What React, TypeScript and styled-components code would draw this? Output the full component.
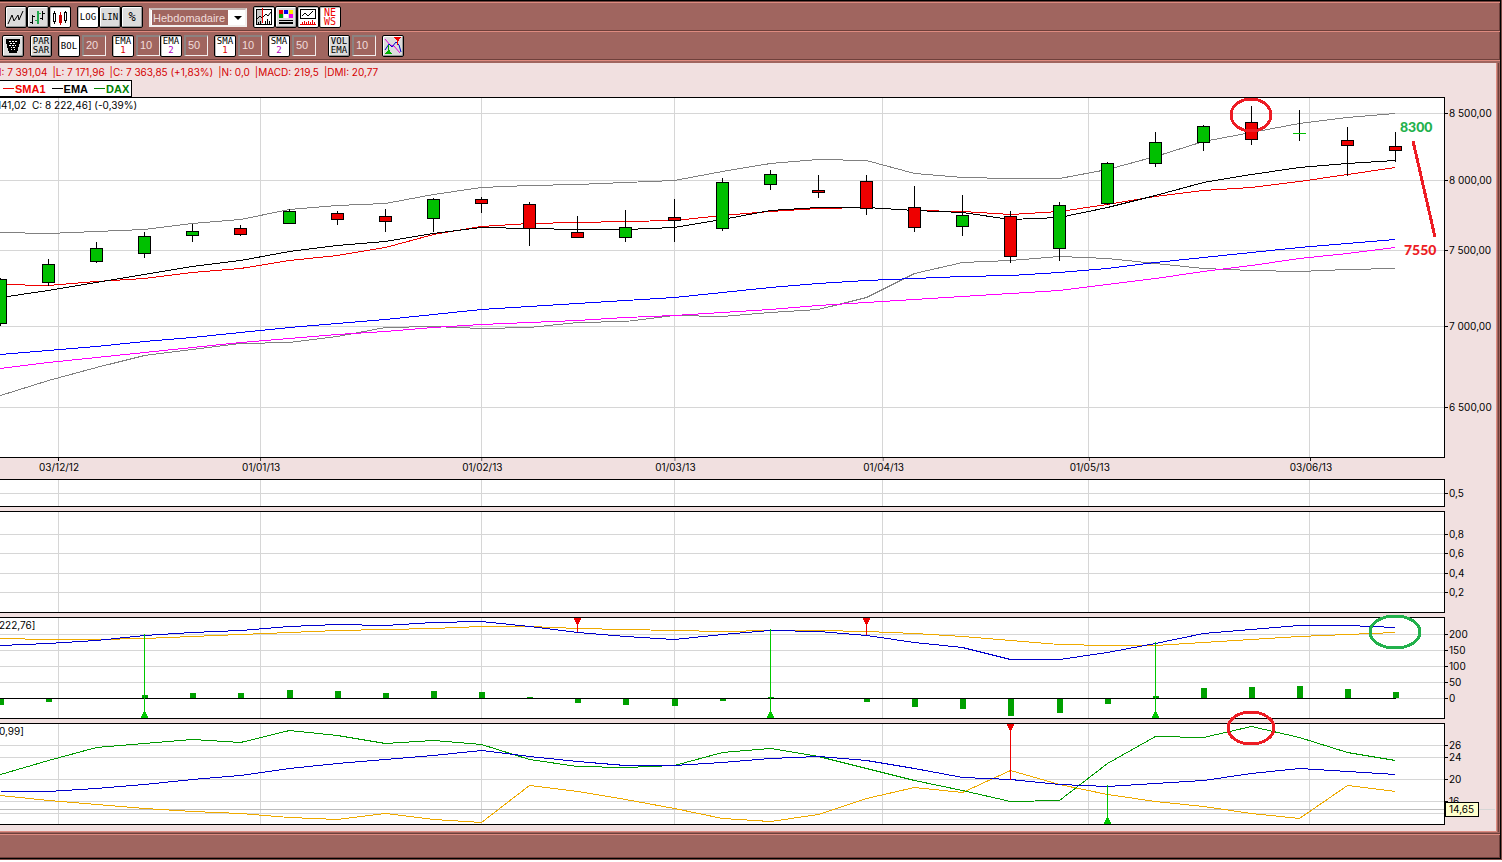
import React from "react";
import styled, { createGlobalStyle, css } from "styled-components";

const brown = "#a0655f";
const brownDark = "#6e3f3a";
const brownLight = "#de8b80";
const rose = "#f1e0e0";
const gridColor = "#d6d6d6";
const uiFont = '"Liberation Sans", Arial, sans-serif';
const chartFont = 'Inter, "Liberation Sans", sans-serif';

const GlobalStyle = createGlobalStyle`
  *, *::before, *::after { box-sizing: border-box; }
  body { margin: 0; background: #fff; font: 11px/14px ${uiFont}; color: #000; }
`;

/* ---------- window frame ---------- */

const OuterEdge = styled.div`
  border-right: 1px solid #7d4b46;
  border-bottom: 1px solid #7d4b46;
`;

const Frame = styled.div`
  display: flex;
  flex-direction: column;
  border: 1px solid #000;
  border-left: 0;
  background: ${brown};
  overflow: hidden;
`;

const Toolbar = styled.div`
  display: flex;
  align-items: flex-start;
  height: 29px;
  padding-top: 4px;
  padding-left: ${(p: { $indent: number }) => p.$indent}px;
  border-top: 1px solid ${brownDark};
  box-shadow: inset 0 1px 0 ${brownLight}, inset -1px 0 0 ${brownDark};
`;

const Divider = styled.div`
  height: 4px;
  border-top: 1px solid ${brownDark};
  box-shadow: inset 0 1px 0 ${brownLight};
`;

const StatusBar = styled.footer`
  height: 25px;
  border-top: 1px solid ${brownDark};
  border-bottom: 1px solid ${brownDark};
  box-shadow: inset 0 1px 0 ${brownLight}, inset -1px 0 0 ${brownDark};
`;

const Workspace = styled.main`
  margin-right: 3px;
  margin-bottom: 1px;
  padding-bottom: 6px;
  background: ${rose};
  border-bottom: 1px solid ${brownLight};
  border-right: 1px solid ${brownLight};
  box-shadow: 1px 0 0 ${brown}, 2px 0 0 ${brownDark};
`;

/* ---------- toolbar parts ---------- */

const Group = styled.div`
  display: flex;
  margin-right: ${(p: { $after?: number }) => p.$after ?? 6}px;
`;

const ToolButton = styled.button<{ $on?: boolean }>`
  display: flex;
  flex-direction: column;
  align-items: center;
  justify-content: center;
  width: 22px;
  height: 22px;
  padding: 0;
  border: 1px solid #000;
  border-radius: 2px;
  background: ${(p) => (p.$on ? "#fff" : "#dcdcdc")};
  box-shadow: ${(p) =>
    p.$on ? "inset 1px 1px 0 #bbb" : "inset 1px 1px 0 #fff, inset -1px -1px 0 #999"};
  color: #000;
  font: 9px/9px "DejaVu Sans Mono", monospace;
  svg { display: block; }
`;

const Ink = styled.span<{ $color?: string; $size?: number }>`
  color: ${(p) => p.$color ?? "inherit"};
  font-size: ${(p) => p.$size ?? 9}px;
`;

const NumberBox = styled.input`
  width: 24px;
  height: 21px;
  margin-left: 2px;
  padding: 0 0 2px 2px;
  border: 1px solid;
  border-width: 2px 1px 1px 2px;
  border-color: #8c8280 #f3eeee #f3eeee #8c8280;
  border-radius: 0;
  background: ${brown};
  color: #f0dcda;
  font: 11px/14px ${uiFont};
  outline: none;
`;

const PeriodBox = styled.label`
  display: grid;
  width: 98px;
  height: 19px;
  margin: 2px 6px 0 6px;
  border: 2px solid #f3efee;
  border-top-color: #c9bab8;
  background: #fff;
`;

const PeriodSelect = styled.select`
  grid-area: 1 / 1;
  appearance: none;
  width: 100%;
  padding: 0 0 0 2px;
  border: 0;
  border-radius: 0;
  background: linear-gradient(${brown}, ${brown}) 1px 0 / 76px 100% no-repeat #fff;
  color: #f0dcda;
  font: 11px/14px ${uiFont};
`;

const Arrow = styled.span`
  grid-area: 1 / 1;
  justify-self: end;
  align-self: center;
  margin-right: 3px;
  border: 4px solid transparent;
  border-top-color: #000;
  border-bottom: 0;
  pointer-events: none;
`;

/* ---------- chart parts ---------- */

const QuoteLine = styled.div`
  display: flex;
  align-items: center;
  gap: 5px;
  height: 17px;
  margin-left: -6px;
  padding-top: 1px;
  color: #d40000;
  font: 10px/14px ${chartFont};
  white-space: nowrap;
`;

const Legend = styled.div`
  display: inline-flex;
  align-items: center;
  gap: 6px;
  height: 17px;
  padding: 0 2px 0 3px;
  border: 1px solid #000;
  border-left: 0;
  background: #fff;
  font-weight: bold;
  vertical-align: top;
`;

const LegendItem = styled.span<{ $color: string }>`
  display: flex;
  align-items: center;
  gap: 1px;
  color: ${(p) => p.$color};
  &::before {
    content: "";
    width: 11px;
    height: 1px;
    background: currentColor;
  }
`;

const LegendRow = styled.div`
  height: 17px;
`;

const PanelRow = styled.section<{ $gap?: boolean }>`
  display: flex;
  ${(p) => p.$gap && css`margin-top: 4px;`}
`;

const Plot = styled.svg`
  flex: 1;
  min-width: 0;
  display: block;
  overflow: visible;
  border: 1px solid #000;
  border-left: 0;
  background: #fff;
  font: 10px ${chartFont};
`;

const Scale = styled.svg`
  flex: none;
  width: 51px;
  display: block;
  overflow: visible;
  font: 10px ${chartFont};
`;

const DateStrip = styled.svg`
  display: block;
  width: calc(100% - 51px);
  height: 21px;
  overflow: visible;
  font: 10px ${chartFont};
`;

/* ---------- data ---------- */

const PLOT_W = 1444;
const pct = (x: number) => `${(x / PLOT_W) * 100}%`;

const quotes = [
  "H: 7 391,04",
  "|L: 7 171,96",
  "|C: 7 363,85 (+1,83%)",
  "|N: 0,0",
  "|MACD: 219,5",
  "|DMI: 20,77",
];

const weeks = [
  0, 48, 96, 144, 192, 240, 289, 337, 385, 433, 481, 529, 577, 625, 674, 722, 770, 818, 866, 914,
  962, 1010, 1059, 1107, 1155, 1203, 1251, 1299, 1347, 1395,
];

const months: [number, string][] = [
  [58, "03/12/12"],
  [260, "01/01/13"],
  [481, "01/02/13"],
  [674, "01/03/13"],
  [882, "01/04/13"],
  [1088, "01/05/13"],
  [1309, "03/06/13"],
];

type Series = { color: string; ys: number[] };

const priceSeries: Series[] = [
  {
    color: "#808080",
    ys: [232, 233, 231, 229, 223, 219, 209, 205, 203, 194, 187, 185, 184, 182, 180, 171, 163, 159, 160, 173, 177, 178, 178, 169, 156, 141, 132, 123, 117, 113],
  },
  {
    color: "#808080",
    ys: [395, 380, 367, 355, 349, 343, 342, 336, 327, 326, 328, 327, 322, 321, 315, 316, 312, 309, 297, 273, 262, 260, 256, 258, 263, 268, 270, 271, 269, 268],
  },
  {
    color: "#ff00ff",
    ys: [368, 362, 357, 352, 347, 342, 338, 334, 331, 327, 324, 322, 320, 317, 315, 312, 309, 305, 302, 299, 296, 293, 290, 284, 278, 271, 265, 258, 253, 247],
  },
  {
    color: "#0000ff",
    ys: [354, 350, 346, 341, 337, 332, 327, 323, 319, 314, 309, 306, 303, 300, 297, 292, 287, 283, 280, 278, 276, 275, 272, 268, 262, 257, 252, 247, 243, 239],
  },
  {
    color: "#ee0000",
    ys: [284, 285, 281, 278, 272, 268, 260, 255, 247, 234, 226, 223, 222, 221, 220, 215, 211, 208, 207, 210, 211, 214, 211, 204, 196, 190, 187, 181, 174, 167],
  },
  {
    color: "#000",
    ys: [297, 290, 282, 274, 266, 260, 251, 245, 241, 233, 227, 228, 229, 229, 227, 219, 210, 207, 207, 210, 212, 219, 217, 207, 195, 182, 174, 167, 163, 160],
  },
];

/* per week: high, body top, body bottom, low, rising */
const candles: [number, number, number, number, boolean][] = [
  [278, 279, 323, 325, true],
  [259, 264, 282, 285, true],
  [242, 248, 261, 262, true],
  [232, 236, 253, 257, true],
  [224, 231, 235, 241, true],
  [225, 228, 234, 235, false],
  [209, 211, 223, 223, true],
  [211, 213, 219, 224, false],
  [209, 216, 221, 231, false],
  [198, 199, 218, 231, true],
  [197, 199, 203, 212, false],
  [202, 204, 228, 245, false],
  [216, 232, 237, 237, false],
  [210, 227, 237, 241, true],
  [199, 217, 220, 241, false],
  [178, 182, 228, 230, true],
  [170, 174, 184, 189, true],
  [175, 190, 192, 197, false],
  [175, 181, 208, 214, false],
  [186, 207, 227, 231, false],
  [195, 215, 226, 235, true],
  [211, 216, 256, 262, false],
  [202, 205, 248, 260, true],
  [162, 163, 203, 204, true],
  [132, 142, 163, 166, true],
  [125, 126, 142, 150, true],
  [106, 122, 139, 144, false],
  [110, 133, 133, 140, true],
  [127, 140, 145, 175, false],
  [132, 146, 150, 161, false],
];

const macdSeries: Series[] = [
  {
    color: "#eeaa00",
    ys: [638, 639, 639, 638, 636, 634, 632, 630, 629, 628, 626, 626, 628, 629, 630, 631, 630, 630, 631, 633, 636, 640, 644, 645, 645, 642, 639, 636, 634, 632],
  },
  {
    color: "#0000cc",
    ys: [645, 643, 640, 635, 632, 630, 626, 624, 625, 622, 621, 626, 632, 636, 639, 634, 630, 631, 635, 642, 647, 659, 659, 652, 643, 633, 629, 625, 625, 627],
  },
];

/* far edge of every histogram bar, measured from the zero line at 698 */
const histogram = [
  705, 702, 698, 695, 693, 693, 690, 691, 693, 691, 692, 697, 703, 705, 706, 701, 697, 698, 702,
  707, 709, 716, 713, 704, 696, 688, 687, 686, 689, 692,
];

const dmiSeries: Series[] = [
  {
    color: "#eeaa00",
    ys: [795, 800, 804, 808, 811, 813, 817, 819, 813, 819, 822, 785, 791, 799, 808, 818, 821, 814, 798, 787, 792, 770, 784, 794, 801, 806, 813, 818, 785, 791],
  },
  {
    color: "#009900",
    ys: [774, 760, 747, 743, 739, 742, 730, 735, 743, 740, 744, 759, 766, 767, 765, 752, 748, 756, 768, 780, 790, 801, 800, 763, 736, 737, 726, 737, 752, 760],
  },
  {
    color: "#0000cc",
    ys: [791, 791, 788, 784, 779, 775, 768, 763, 759, 755, 750, 756, 761, 765, 765, 762, 758, 756, 760, 768, 777, 779, 784, 786, 783, 780, 773, 768, 771, 774],
  },
];

/* ---------- chart components ---------- */

function Lines({ series }: { series: Series[] }) {
  return (
    <g fill="none" transform="translate(0.5 0.5)">
      {series.map((s, i) => (
        <polyline key={i} stroke={s.color} points={s.ys.map((y, k) => `${weeks[k]},${y}`).join(" ")} />
      ))}
    </g>
  );
}

function Candles() {
  return (
    <g>
      {candles.map(([high, top, bottom, low, up], i) => {
        const x = weeks[i];
        const fill = up ? "#00c000" : "#ee0000";
        return (
          <g key={x}>
            <rect x={x} y={high} width={1} height={low - high + 1} />
            {top === bottom ? (
              <rect x={x - 6} y={top} width={13} height={1} fill={fill} />
            ) : (
              <>
                <rect x={x - 6} y={top} width={13} height={bottom - top + 1} />
                <rect x={x - 5} y={top + 1} width={11} height={bottom - top - 1} fill={fill} />
              </>
            )}
          </g>
        );
      })}
    </g>
  );
}

function Signal({ x, up, base, to }: { x: number; up?: boolean; base: number; to: number }) {
  const head = up
    ? `M${x - 3} ${base + 1}h7v-2h-1v-2h-1v-2h-3v2h-1v2h-1z`
    : `M${x - 3} ${base}h7v2h-1v2h-1v2h-3v-2h-1v-2h-1z`;
  return (
    <g fill={up ? "#00c800" : "#ee0000"}>
      <rect x={x} y={Math.min(base, to)} width={1} height={Math.abs(base - to)} />
      <path d={head} />
    </g>
  );
}

type PanelProps = {
  label: string;
  top: number;
  height: number;
  ticks: [number, string][];
  extraGrid?: number[];
  gap?: boolean;
  caption?: React.ReactNode;
  scaleExtra?: React.ReactNode;
  children?: React.ReactNode;
};

function Panel({ label, top, height, ticks, extraGrid = [], gap, caption, scaleExtra, children }: PanelProps) {
  const inner = height - 2;
  return (
    <PanelRow $gap={gap} aria-label={label}>
      <Plot height={height}>
        <svg
          width="100%"
          height={inner}
          viewBox={`0 ${top + 1} ${PLOT_W} ${inner}`}
          preserveAspectRatio="none"
          shapeRendering="crispEdges"
          overflow="visible"
        >
          <g fill={gridColor}>
            {[...ticks.map((t) => t[0]), ...extraGrid].map((y) => (
              <rect key={y} x={0} y={y} width={PLOT_W} height={1} />
            ))}
            {months.map(([x]) => (
              <rect key={x} x={x} y={top + 1} width={1} height={inner} />
            ))}
          </g>
          {children}
        </svg>
        {caption}
      </Plot>
      <Scale height={height} viewBox={`0 ${top} 51 ${height}`}>
        {ticks.map(([y, text]) => (
          <g key={y}>
            <rect x={0} y={y} width={3} height={1} />
            <text x={4} y={y + 4}>{text}</text>
          </g>
        ))}
        {scaleExtra}
      </Scale>
    </PanelRow>
  );
}

/* ---------- toolbar icons ---------- */

const Icon = ({ children }: { children: React.ReactNode }) => (
  <svg width={20} height={20} viewBox="0 0 20 20" fill="none" stroke="#000" shapeRendering="crispEdges" aria-hidden="true">
    {children}
  </svg>
);

const LineIcon = () => (
  <Icon>
    <path d="M2 17L6 8L8 14L12 8L13 13L17 4" shapeRendering="auto" />
  </Icon>
);

const BarsIcon = () => (
  <Icon>
    <path d="M4.500 8v9M2 15.500h2M5 9.500h2M14.500 4v9M12 11.500h2M15 6.500h2" />
    <path d="M10 4v13" stroke="#22a84c" strokeWidth={2} />
    <path d="M7 13.500h2M11 6.500h2" stroke="#22a84c" />
  </Icon>
);

const CandleIcon = () => (
  <Icon>
    <path d="M4.500 4v3M4.500 14v3M15.500 4v2M15.500 13v3" />
    <path d="M3.500 6.500h2v8h-2zM14.500 5.500h2v8h-2z" />
    <path d="M10.500 5v13" stroke="#cc0000" />
    <path d="M9 8h3v8h-3z" fill="#cc0000" stroke="none" />
  </Icon>
);

const ZoneIcon = () => (
  <Icon>
    <path d="M2 2h6v16h-6z" fill="#c8c8c8" stroke="none" />
    <path d="M2.500 17.500v-15h15v15z" />
    <path d="M3 12l3-3l2 2l4-4l2 2l3-4" shapeRendering="auto" />
    <path d="M4.500 15v2M6.500 14v3M11.500 14v3M13.500 12v5M15.500 14v3" />
    <path d="M8.500 1v15" stroke="#ee0000" />
  </Icon>
);

const PaletteIcon = () => (
  <Icon>
    <g stroke="none">
      <path d="M3 3h4v4h-4z" fill="#ee0000" />
      <path d="M8 3h4v4h-4z" fill="#0000ee" />
      <path d="M13 3h4v4h-4z" fill="#ffee00" />
      <path d="M3 7h4v4h-4z" fill="#00a000" />
      <path d="M8 7h4v4h-4z" fill="#fff" />
      <path d="M13 7h4v4h-4z" fill="#ee00ee" />
      <path d="M3 13h14v1h-14zM3 15h14v2h-14z" fill="#000" />
    </g>
  </Icon>
);

const VolumeIcon = () => (
  <Icon>
    <path d="M2.500 2.500h15v9h-15z" />
    <path d="M4 9l3-3l3 3l5-5" shapeRendering="auto" />
    <path d="M2 17.500h16M4.500 15v2M6.500 14v3M8.500 15v2M10.500 14v3M12.500 15v2M14.500 13v4M16.500 15v2" stroke="#ee0000" />
  </Icon>
);

const BasketIcon = () => (
  <Icon>
    <path d="M3 3h14v3l-3 11h-8l-3-11z" fill="#000" stroke="none" />
    <path
      d="M6 5.500h2M9 5.500h2M12 5.500h2M7 7.500h2M10 7.500h2M6 9.500h2M9 9.500h2M12 9.500h1M8 11.500h1M10 11.500h2M8 13.500h1M11 13.500h1"
      stroke="#fff"
    />
  </Icon>
);

const SignalIcon = () => (
  <Icon>
    <path d="M2 3L7 9L11 10L17 17" stroke="#e000e0" shapeRendering="auto" />
    <path d="M2 14L6 8L9 11L13 6L16 9L18 16" stroke="#0000cc" shapeRendering="auto" />
    <path d="M11 1h7l-3 5zM14 5h1v4h-1z" fill="#ee0000" stroke="none" />
    <path d="M2 18h7l-3-5zM5 9h1v5h-1z" fill="#00b000" stroke="none" />
  </Icon>
);

/* ---------- toolbar controls ---------- */

function Indicator({ name, index, color, value, on = true, after }: {
  name: string;
  index?: string;
  color?: string;
  value: string;
  on?: boolean;
  after?: number;
}) {
  const label = index ? `${name} ${index}` : name;
  return (
    <Group $after={after}>
      <ToolButton $on={on} aria-label={label}>
        <Ink>{name}</Ink>
        {index && <Ink $color={color}>{index}</Ink>}
      </ToolButton>
      <NumberBox aria-label={`${label} period`} defaultValue={value} />
    </Group>
  );
}

export default function App() {
  return (
    <>
      <GlobalStyle />
      <OuterEdge>
        <Frame>
          <Toolbar $indent={5}>
            <Group $after={6}>
              <ToolButton aria-label="Line"><LineIcon /></ToolButton>
              <ToolButton aria-label="Bars"><BarsIcon /></ToolButton>
              <ToolButton aria-label="Candles" $on><CandleIcon /></ToolButton>
            </Group>
            <Group $after={0}>
              <ToolButton $on>LOG</ToolButton>
              <ToolButton>LIN</ToolButton>
              <ToolButton><Ink $size={12}>%</Ink></ToolButton>
            </Group>
            <PeriodBox>
              <PeriodSelect aria-label="Period" defaultValue="Hebdomadaire">
                <option>Hebdomadaire</option>
              </PeriodSelect>
              <Arrow />
            </PeriodBox>
            <Group>
              <ToolButton aria-label="Zone" $on><ZoneIcon /></ToolButton>
              <ToolButton aria-label="Colours"><PaletteIcon /></ToolButton>
              <ToolButton aria-label="Volume" $on><VolumeIcon /></ToolButton>
              <ToolButton $on>
                <Ink $color="#ee0000" $size={10}>NE</Ink>
                <Ink $color="#ee0000" $size={10}>WS</Ink>
              </ToolButton>
            </Group>
          </Toolbar>

          <Toolbar $indent={2}>
            <Group><ToolButton aria-label="Basket"><BasketIcon /></ToolButton></Group>
            <Group>
              <ToolButton>
                <Ink>PAR</Ink>
                <Ink>SAR</Ink>
              </ToolButton>
            </Group>
            <Indicator name="BOL" value="20" />
            <Indicator name="EMA" index="1" color="#dd0000" value="10" after={0} />
            <Indicator name="EMA" index="2" color="#b000c0" value="50" />
            <Indicator name="SMA" index="1" color="#dd0000" value="10" />
            <Indicator name="SMA" index="2" color="#b000c0" value="50" after={12} />
            <Indicator name="VOL" index="EMA" value="10" on={false} />
            <ToolButton aria-label="Signals"><SignalIcon /></ToolButton>
          </Toolbar>
          <Divider />

          <Workspace>
            <QuoteLine>
              {quotes.map((q) => (
                <span key={q}>{q}</span>
              ))}
            </QuoteLine>
            <LegendRow>
              <Legend>
                <LegendItem $color="#ee0000">SMA1</LegendItem>
                <LegendItem $color="#000">EMA</LegendItem>
                <LegendItem $color="#008000">DAX</LegendItem>
              </Legend>
            </LegendRow>

            <Panel
              label="Price"
              top={97}
              height={361}
              ticks={[
                [113, "8 500,00"],
                [180, "8 000,00"],
                [250, "7 500,00"],
                [326, "7 000,00"],
                [407, "6 500,00"],
              ]}
              caption={
                <>
                  <text x={-3} y={11} xmlSpace="preserve">141,02  C: 8 222,46] (-0,39%)</text>
                  <g fontFamily="Lato, sans-serif" fontWeight={900} fontSize={14}>
                    <text x={pct(1400)} y={34} fill="#22b14c">8300</text>
                    <text x={pct(1404)} y={157} fill="#ed1c24">7550</text>
                  </g>
                </>
              }
            >
              <Lines series={priceSeries} />
              <Candles />
              <g fill="none" stroke="#ed1c24" strokeWidth={3}>
                <ellipse cx={1251} cy={115} rx={20} ry={16} />
                <line x1={1413} y1={141} x2={1435} y2={237} />
              </g>
            </Panel>

            <DateStrip>
              {months.map(([x, text]) => (
                <React.Fragment key={x}>
                  <svg x={pct(x)} y={0} width={1} height={3}>
                    <rect width={1} height={3} />
                  </svg>
                  <text x={pct(x + 1)} y={13} textAnchor="middle">{text}</text>
                </React.Fragment>
              ))}
            </DateStrip>

            <Panel label="Volume" top={479} height={28} ticks={[[493, "0,5"]]} />

            <Panel
              label="Oscillator"
              gap
              top={511}
              height={102}
              ticks={[
                [534, "0,8"],
                [553, "0,6"],
                [573, "0,4"],
                [592, "0,2"],
              ]}
            />

            <Panel
              label="MACD"
              gap
              top={617}
              height={102}
              ticks={[
                [634, "200"],
                [650, "150"],
                [666, "100"],
                [682, "50"],
                [698, "0"],
              ]}
              caption={<text x={-1} y={11}>222,76]</text>}
            >
              <g fill="#00a000">
                {histogram.map((edge, i) => (
                  <rect
                    key={weeks[i]}
                    x={weeks[i] - 2}
                    y={Math.min(edge, 698)}
                    width={6}
                    height={Math.abs(edge - 698)}
                  />
                ))}
              </g>
              <rect x={0} y={698} width={1396} height={1} />
              <Lines series={macdSeries} />
              <Signal x={144} up base={717} to={634} />
              <Signal x={770} up base={717} to={629} />
              <Signal x={1155} up base={717} to={642} />
              <Signal x={577} base={618} to={632} />
              <Signal x={866} base={618} to={635} />
              <ellipse cx={1395} cy={632} rx={25} ry={16} fill="none" stroke="#22b14c" strokeWidth={3} />
            </Panel>

            <Panel
              label="DMI"
              gap
              top={723}
              height={102}
              ticks={[
                [745, "26"],
                [757, "24"],
                [779, "20"],
                [801, "16"],
              ]}
              extraGrid={[813]}
              caption={<text x={-1} y={11}>0,99]</text>}
              scaleExtra={
                <g shapeRendering="crispEdges">
                  <rect x={34} y={809} width={16} height={1} fill={gridColor} />
                  <rect x={0} y={802} width={34} height={15} />
                  <rect x={1} y={803} width={32} height={13} fill="#ffffcc" />
                  <text x={4} y={813}>14,65</text>
                </g>
              }
            >
              <rect x={0} y={809} width={PLOT_W} height={1} fill="#bcbcbc" />
              <Lines series={dmiSeries} />
              <Signal x={1010} base={724} to={780} />
              <Signal x={1107} up base={823} to={785} />
              <ellipse cx={1251} cy={728} rx={23} ry={16} fill="none" stroke="#ed1c24" strokeWidth={3} />
            </Panel>
          </Workspace>

          <StatusBar />
        </Frame>
      </OuterEdge>
    </>
  );
}
